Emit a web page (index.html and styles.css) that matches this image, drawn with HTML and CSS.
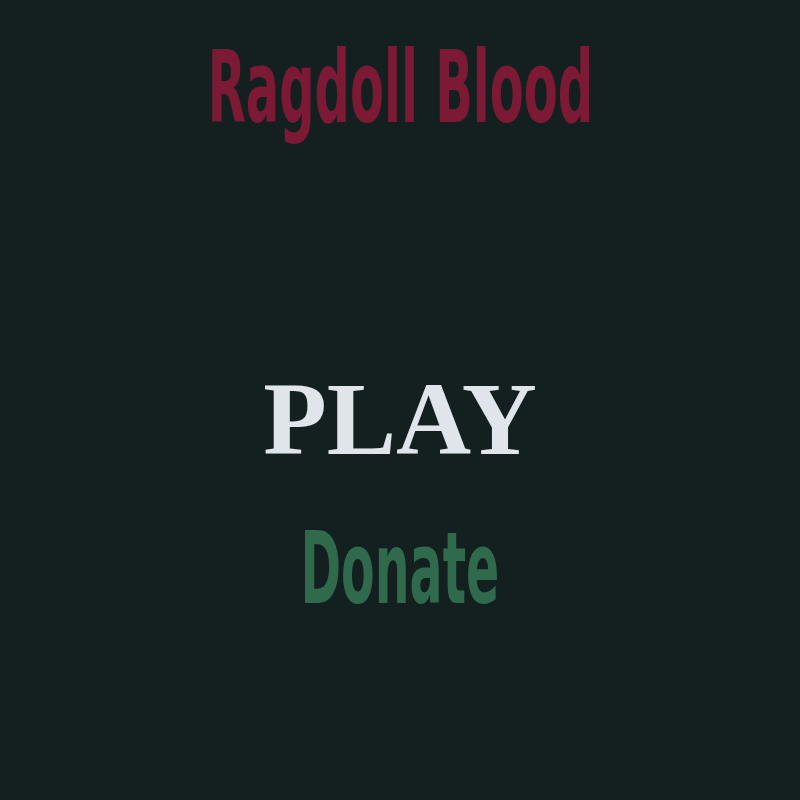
FILE: index.html
```html
<!DOCTYPE html>
<html lang="en">
<head>
<meta charset="utf-8">
<title>Ragdoll Blood</title>
<link rel="stylesheet" href="styles.css">
</head>
<body>
  <main class="menu">
    <h1 class="title"><span class="narrow">Ragdoll Blood</span></h1>
    <nav class="options">
      <a class="play" href="#">PLAY</a>
      <a class="donate" href="#"><span class="narrow">Donate</span></a>
    </nav>
  </main>
</body>
</html>
```

FILE: styles.css
```css
html, body {
  margin: 0;
  padding: 0;
  height: 100%;
  background: #142020;
}

.menu {
  display: flex;
  flex-direction: column;
  align-items: center;
  padding-top: 38px;
}

.title {
  margin: 0;
  font-family: "DejaVu Sans Condensed", "DejaVu Sans", sans-serif;
  font-weight: bold;
  font-size: 100px;
  line-height: 1;
  color: #7c1a36;
  white-space: nowrap;
}

.narrow {
  display: inline-block;
  transform: scaleX(0.55);
}

.options {
  display: flex;
  flex-direction: column;
  align-items: center;
  gap: 48px;
  margin-top: 229px;
}

.options a {
  text-decoration: none;
  line-height: 1;
  white-space: nowrap;
}

.play {
  font-family: "Liberation Serif", serif;
  font-weight: bold;
  font-size: 104px;
  color: #dfe5ea;
}

.donate {
  font-family: "DejaVu Sans Condensed", "DejaVu Sans", sans-serif;
  font-weight: bold;
  font-size: 99px;
  color: #2f6a4c;
}
```
